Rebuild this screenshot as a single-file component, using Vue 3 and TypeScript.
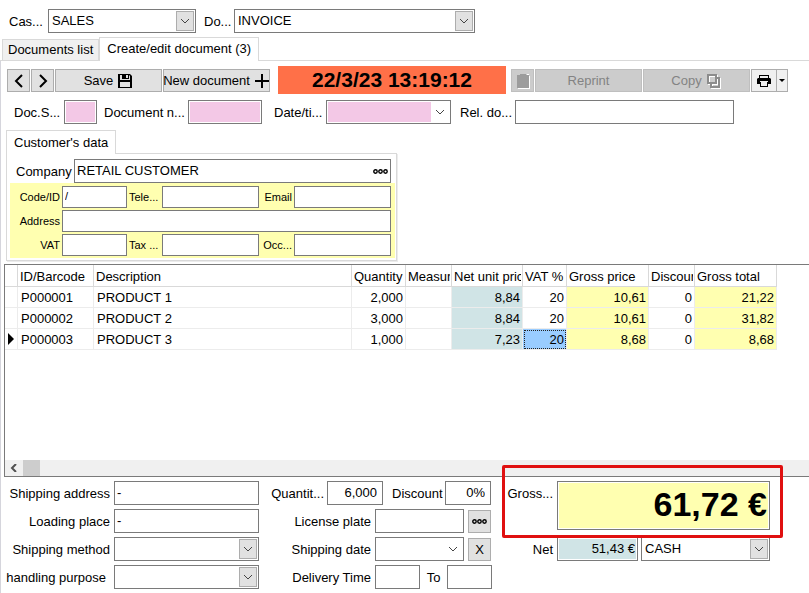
<script setup lang="ts">
import { ref } from 'vue'

interface Column {
  key: keyof Line
  title: string
  kind: string
}

interface Line {
  id: string
  description: string
  quantity: string
  measure: string
  netPrice: string
  vat: string
  grossPrice: string
  discount: string
  grossTotal: string
}

const columns: Column[] = [
  { key: 'id', title: 'ID/Barcode', kind: 'id' },
  { key: 'description', title: 'Description', kind: 'description' },
  { key: 'quantity', title: 'Quantity', kind: 'quantity number' },
  { key: 'measure', title: 'Measure', kind: 'measure' },
  { key: 'netPrice', title: 'Net unit price', kind: 'net number' },
  { key: 'vat', title: 'VAT %', kind: 'vat number' },
  { key: 'grossPrice', title: 'Gross price', kind: 'gross number' },
  { key: 'discount', title: 'Discount', kind: 'discount number' },
  { key: 'grossTotal', title: 'Gross total', kind: 'gross number' },
]

const lines: Line[] = [
  { id: 'P000001', description: 'PRODUCT 1', quantity: '2,000', measure: '', netPrice: '8,84', vat: '20', grossPrice: '10,61', discount: '0', grossTotal: '21,22' },
  { id: 'P000002', description: 'PRODUCT 2', quantity: '3,000', measure: '', netPrice: '8,84', vat: '20', grossPrice: '10,61', discount: '0', grossTotal: '31,82' },
  { id: 'P000003', description: 'PRODUCT 3', quantity: '1,000', measure: '', netPrice: '7,23', vat: '20', grossPrice: '8,68', discount: '0', grossTotal: '8,68' },
]

const currentLine = ref(2)
const company = ref('RETAIL CUSTOMER')
const code = ref('/')
const shippingAddress = ref('-')
const loadingPlace = ref('-')
const quantity = ref('6,000')
const discount = ref('0%')
const gross = ref('61,72 €')
const net = ref('51,43 €')
</script>

<template>
  <main class="window">
    <div class="filters">
      <label for="cash">Cas...</label>
      <span class="combo cash">
        <select id="cash"><option>SALES</option></select>
        <svg class="arrow boxed" viewBox="0 0 18 20"><path d="M5 8l4 4 4-4" /></svg>
      </span>
      <label for="doc-type">Do...</label>
      <span class="combo doc-type">
        <select id="doc-type"><option>INVOICE</option></select>
        <svg class="arrow boxed" viewBox="0 0 18 20"><path d="M5 8l4 4 4-4" /></svg>
      </span>
    </div>

    <nav class="tabs">
      <button class="tab" type="button">Documents list</button>
      <button class="tab active" type="button">Create/edit document (3)</button>
    </nav>

    <section class="page">
      <div class="toolbar">
        <button class="btn square" type="button" aria-label="Previous">
          <svg class="icon" viewBox="0 0 16 16"><path class="thick" d="M11 2L5 8l6 6" /></svg>
        </button>
        <button class="btn square" type="button" aria-label="Next">
          <svg class="icon" viewBox="0 0 16 16"><path class="thick" d="M5 2l6 6-6 6" /></svg>
        </button>
        <button class="btn wide" type="button">
          Save
          <svg class="icon" viewBox="0 0 16 16">
            <path fill-rule="evenodd" d="M1 1h12l2 2v12H1zM3 2v12h10V9H3zM3 2v5h10V3l-1-1v4H5V2zM9 2h2v3H9z" />
          </svg>
        </button>
        <button class="btn wide" type="button">
          New document
          <svg class="icon" viewBox="0 0 16 16"><path class="thick" d="M1 8h14M8 1v14" /></svg>
        </button>
        <output class="clock">22/3/23 13:19:12</output>
        <button class="btn square" type="button" disabled aria-label="Delete">
          <svg class="icon" viewBox="0 0 16 16">
            <path fill="#fff" d="M3 3h12v13H3zM12 1h2v1h-2z" />
            <path fill="#9c9c9c" d="M2 2h3V1h6v1h3v2H2zM2 4h12v11H2z" />
          </svg>
        </button>
        <button class="btn wide" type="button" disabled>Reprint</button>
        <button class="btn wide" type="button" disabled>
          Copy
          <svg class="icon" viewBox="0 0 16 16">
            <g fill="none" stroke-width="2">
              <path stroke="#fff" d="M3 3h8v8H3zM14 5v10H6v-3M12 5h2" />
              <path stroke="#8c8c8c" d="M2 2h8v8H2zM11 5h2v9H5v-3" />
            </g>
          </svg>
        </button>
        <button class="btn print" type="button" aria-label="Print">
          <svg class="icon" viewBox="0 0 16 16">
            <path fill-rule="evenodd" d="M3 2h10v3H3zM4 3v2h8V3zM2 5h12l1 1v5h-3V9H4v2H1V6zM4 8h8v6H4zM5 9v4h6V9z" />
          </svg>
        </button>
        <button class="btn more" type="button" aria-label="Print options">
          <svg viewBox="0 0 6 4"><path d="M0 0h6L3 3z" /></svg>
        </button>
      </div>

      <div class="document">
        <label class="l-series" for="series">Doc.S...</label>
        <input id="series" class="field pink series" type="text">
        <label class="l-number" for="number">Document n...</label>
        <input id="number" class="field pink number-box" type="text">
        <label class="l-date" for="date">Date/ti...</label>
        <span class="combo date">
          <input id="date" type="text">
          <svg class="arrow" viewBox="0 0 18 20"><path d="M5 8l4 4 4-4" /></svg>
        </span>
        <label class="l-related" for="related">Rel. do...</label>
        <input id="related" class="field related" type="text">
      </div>

      <section class="customer">
        <button class="customer-tab" type="button">Customer's data</button>
        <div class="customer-panel">
          <div class="company">
            <label for="company">Company</label>
            <span class="combo">
              <input id="company" v-model="company" type="text">
              <button class="dots" type="button" aria-label="Choose company">
                <svg viewBox="0 0 15 5"><circle cx="2.500" cy="2.500" r="1.700" /><circle cx="7.500" cy="2.500" r="1.700" /><circle cx="12.500" cy="2.500" r="1.700" /></svg>
              </button>
            </span>
          </div>
          <div class="details">
            <label for="code">Code/ID</label>
            <input id="code" v-model="code" class="field" type="text">
            <label class="start" for="phone">Tele...</label>
            <input id="phone" class="field" type="text">
            <label for="email">Email</label>
            <input id="email" class="field" type="text">
            <label for="address">Address</label>
            <input id="address" class="field whole" type="text">
            <label for="vat">VAT</label>
            <input id="vat" class="field" type="text">
            <label class="start" for="tax">Tax ...</label>
            <input id="tax" class="field" type="text">
            <label for="occupation">Occ...</label>
            <input id="occupation" class="field" type="text">
          </div>
        </div>
      </section>

      <section class="lines">
        <div class="lines-body">
          <table>
            <colgroup>
              <col class="marker">
              <col v-for="column in columns" :key="column.key" :class="column.kind">
            </colgroup>
            <thead>
              <tr>
                <th></th>
                <th v-for="column in columns" :key="column.key"><div>{{ column.title }}</div></th>
              </tr>
            </thead>
            <tbody>
              <tr v-for="(line, index) in lines" :key="line.id" @click="currentLine = index">
                <td class="marker">
                  <svg v-if="index === currentLine" viewBox="0 0 6 12"><path d="M0 0l6 6-6 6z" /></svg>
                </td>
                <td
                  v-for="column in columns"
                  :key="column.key"
                  :class="[column.kind, { selected: column.key === 'vat' && index === currentLine }]"
                >{{ line[column.key] }}</td>
              </tr>
            </tbody>
          </table>
        </div>
        <div class="scrollbar">
          <button type="button" aria-label="Scroll left">
            <svg viewBox="0 0 8 8"><path d="M6 0L2 4l4 4" /></svg>
          </button>
          <div class="thumb"></div>
        </div>
      </section>

      <div class="footer">
        <div class="shipping">
          <label for="ship-address">Shipping address</label>
          <input id="ship-address" v-model="shippingAddress" class="field" type="text">
          <label for="loading">Loading place</label>
          <input id="loading" v-model="loadingPlace" class="field" type="text">
          <label for="method">Shipping method</label>
          <span class="combo">
            <select id="method"><option></option></select>
            <svg class="arrow boxed" viewBox="0 0 18 20"><path d="M5 8l4 4 4-4" /></svg>
          </span>
          <label class="purpose" for="purpose">handling purpose</label>
          <span class="combo">
            <select id="purpose"><option></option></select>
            <svg class="arrow boxed" viewBox="0 0 18 20"><path d="M5 8l4 4 4-4" /></svg>
          </span>
        </div>

        <div class="delivery">
          <div class="row">
            <label for="quantity">Quantit...</label>
            <input id="quantity" v-model="quantity" class="field end quantity-box" type="text">
            <label class="l-discount" for="discount">Discount</label>
            <input id="discount" v-model="discount" class="field end discount-box" type="text">
          </div>
          <div class="row">
            <label for="plate">License plate</label>
            <input id="plate" class="field plate" type="text">
            <button class="btn square" type="button" aria-label="Choose vehicle">
              <svg class="dots-icon" viewBox="0 0 15 5"><circle cx="2.500" cy="2.500" r="1.700" /><circle cx="7.500" cy="2.500" r="1.700" /><circle cx="12.500" cy="2.500" r="1.700" /></svg>
            </button>
          </div>
          <div class="row">
            <label for="ship-date">Shipping date</label>
            <span class="combo plate">
              <input id="ship-date" type="text">
              <svg class="arrow" viewBox="0 0 18 20"><path d="M5 8l4 4 4-4" /></svg>
            </span>
            <button class="btn square" type="button">X</button>
          </div>
          <div class="row">
            <label for="time-from">Delivery Time</label>
            <input id="time-from" class="field time" type="text">
            <label class="l-to" for="time-to">To</label>
            <input id="time-to" class="field time" type="text">
          </div>
        </div>

        <div class="totals">
          <label for="gross">Gross...</label>
          <input id="gross" v-model="gross" class="field end gross-box" type="text">
          <label class="l-net" for="net">Net</label>
          <input id="net" v-model="net" class="field end net-box" type="text">
          <span class="combo">
            <select aria-label="Payment"><option>CASH</option></select>
            <svg class="arrow boxed" viewBox="0 0 18 20"><path d="M5 8l4 4 4-4" /></svg>
          </span>
          <div class="highlight"></div>
        </div>
      </div>
    </section>
  </main>
</template>

<style>
body {
  background: #fff;
}
</style>

<style scoped>
.window,
.window * {
  box-sizing: border-box;
}

.window {
  display: flex;
  flex-direction: column;
  min-height: 100vh;
  overflow: hidden;
  color: #000;
  font: 13px/16px "Liberation Sans", Arial, sans-serif;
}

button,
input,
select {
  margin: 0;
  color: inherit;
  font: inherit;
}

label {
  padding-top: 2px;
  white-space: nowrap;
}

svg {
  display: block;
  flex: none;
}

/* Fields */
.field,
.combo {
  height: 24px;
  border: 1px solid #7a7a7a;
  border-radius: 0;
  background: #fff;
}

.field {
  min-width: 0;
  padding: 0 2px 2px;
  outline: none;
}

.end {
  text-align: right;
}

.pink {
  background: #f3c8e6;
  box-shadow: inset 0 0 0 1px #fff;
}

.combo {
  display: grid;
  grid-template-columns: minmax(0, 1fr) 18px;
  padding: 1px;
}

.combo select,
.combo input {
  grid-area: 1 / 1 / 2 / 3;
  width: 100%;
  min-width: 0;
  height: 20px;
  padding: 0 2px;
  border: 0;
  outline: none;
  appearance: none;
  background: transparent;
}

.combo input {
  padding: 0 1px 2px;
}

.arrow {
  grid-area: 1 / 2;
  width: 18px;
  height: 20px;
  fill: none;
  stroke: #444;
  pointer-events: none;
}

.boxed {
  background: #e1e1e1;
  outline: 1px solid #adadad;
  outline-offset: -1px;
}

/* Buttons */
.btn {
  display: flex;
  align-items: center;
  justify-content: center;
  gap: 4px;
  height: 23px;
  padding: 1px 0 0;
  border: 1px solid #adadad;
  background: #e1e1e1;
  white-space: nowrap;
}

.btn:disabled {
  border-color: #bfbfbf;
  background: #ccc;
  color: #838383;
}

.square {
  width: 23px;
}

.wide {
  width: 107px;
}

.icon {
  width: 16px;
  height: 16px;
}

.thick {
  fill: none;
  stroke: #000;
  stroke-width: 2;
}

/* Top filters */
.filters {
  display: flex;
  align-items: center;
  padding: 9px 9px 0;
}

.filters label {
  width: 39px;
}

.filters .cash {
  width: 148px;
  margin-right: 8px;
}

.filters .cash + label {
  width: 30px;
}

.doc-type {
  width: 241px;
}

/* Document tabs */
.tabs {
  display: flex;
  align-items: flex-end;
  height: 28px;
  padding-left: 2px;
  border-bottom: 1px solid #d9d9d9;
}

.tab {
  height: 21px;
  padding: 0 5px;
  border: 1px solid #d9d9d9;
  border-bottom: 0;
  background: #f0f0f0;
  white-space: nowrap;
}

.tab.active {
  height: 24px;
  margin: 0 0 -1px;
  padding: 0 7px 2px;
  background: #fff;
}

.page {
  display: flex;
  flex: 1;
  flex-direction: column;
  border-left: 1px solid #d5d5dc;
}

.toolbar {
  display: flex;
  align-items: center;
  gap: 1px;
  padding: 5px 6px 0;
}

.clock {
  width: 228px;
  height: 28px;
  margin: 0 4px 0 7px;
  background: #ff7048;
  font-size: 21px;
  font-weight: bold;
  line-height: 28px;
  text-align: center;
}

.print,
.more {
  background: #f0f0f0;
}

.print {
  width: 26px;
}

.more {
  width: 12px;
  margin-left: -2px;
}

.more svg {
  width: 6px;
  height: 4px;
}

.document {
  display: flex;
  align-items: center;
  padding: 6px 13px 0;
}

.l-series {
  width: 50px;
}

.series {
  width: 33px;
  margin-right: 7px;
}

.l-number {
  width: 84px;
}

.number-box {
  width: 74px;
  margin-right: 12px;
}

.l-date {
  width: 52px;
}

.date {
  width: 125px;
  margin-right: 9px;
}

.combo.date input {
  grid-area: 1 / 1;
  background: #f3c8e6;
}

.l-related {
  width: 55px;
}

.related {
  width: 219px;
}

/* Customer */
.customer {
  width: 396px;
  padding: 6px 0 0 5px;
}

.customer-tab {
  display: block;
  position: relative;
  height: 24px;
  padding: 0 7px;
  border: 1px solid #d9d9d9;
  border-bottom: 0;
  background: #fff;
}

.customer-panel {
  margin-top: -1px;
  padding: 5px 1px 2px 3px;
  border: 1px solid #d9d9d9;
  box-shadow: 1px 1px 0 #ececec;
}

.company {
  display: grid;
  grid-template-columns: 64px 1fr;
  align-items: center;
  padding-right: 4px;
}

.company label {
  padding-left: 6px;
}

.dots {
  grid-area: 1 / 2;
  display: grid;
  place-items: center;
  position: relative;
  padding: 0;
  border: 0;
  background: transparent;
}

.dots svg,
.dots-icon {
  width: 15px;
  height: 5px;
  fill: none;
  stroke: #000;
  stroke-width: 1.4;
}

.details {
  display: grid;
  grid-template-columns: 50px 65px 31px 97px 31px 97px;
  gap: 2px;
  align-items: center;
  padding: 3px 4px 2px 0;
  background: #ffffb0;
  font-size: 11px;
  column-gap: 2px;
}

.details label {
  padding-top: 0;
  text-align: right;
}

.details .start {
  text-align: left;
}

.details .field {
  height: 22px;
}

.details .whole {
  grid-column: 2 / -1;
}

/* Document lines */
.lines {
  display: flex;
  flex: 1;
  flex-direction: column;
  min-height: 150px;
  margin: 3px 0 0 3px;
  border: 1px solid #7a7a7a;
  border-right: 0;
}

.lines-body {
  flex: 1;
  overflow: hidden;
}

table {
  width: 772px;
  border-spacing: 0;
  table-layout: fixed;
}

col.marker {
  width: 13px;
}

col.id {
  width: 76px;
}

col.description {
  width: 258px;
}

col.quantity {
  width: 54px;
}

col.measure,
col.discount {
  width: 46px;
}

col.net {
  width: 71px;
}

col.vat {
  width: 44px;
}

col.gross {
  width: 82px;
}

th,
td {
  overflow: hidden;
  height: 21px;
  padding: 2px 3px 0;
  border-right: 1px solid #ececec;
  border-bottom: 1px solid #ececec;
  text-align: left;
  white-space: nowrap;
}

th {
  height: 22px;
  padding: 2px 1px 0 2px;
  border-color: #d9d9d9;
  font-weight: normal;
}

th div {
  overflow: hidden;
}

td.number {
  padding-right: 2px;
  text-align: right;
}

td.marker {
  padding-top: 0;
}

td.marker svg {
  width: 6px;
  height: 12px;
}

td.net {
  background: #d0e4e6;
}

td.gross {
  background: #ffffb0;
}

td.selected {
  background: #99ccff;
  outline: 1px dotted #222;
  outline-offset: -2px;
}

.scrollbar {
  display: flex;
  height: 16px;
  background: #f0f0f0;
}

.scrollbar button {
  display: grid;
  place-items: center;
  width: 18px;
  padding: 0;
  border: 0;
  background: transparent;
}

.scrollbar svg {
  width: 8px;
  height: 8px;
  fill: none;
  stroke: #505050;
  stroke-width: 2;
}

.thumb {
  width: 17px;
  background: #cdcdcd;
}

/* Footer */
.footer {
  display: flex;
  align-items: flex-start;
  padding: 4px 0;
}

.shipping {
  display: grid;
  grid-template-columns: 109px 145px;
  gap: 4px;
  align-items: center;
  column-gap: 4px;
}

.shipping label,
.row > label:first-child,
.totals label {
  text-align: right;
}

.purpose {
  padding-right: 4px;
}

.delivery {
  display: flex;
  flex-direction: column;
  gap: 4px;
  width: 233px;
}

.row {
  display: flex;
  align-items: center;
}

.row > label:first-child {
  width: 112px;
  margin-right: 4px;
}

.row:first-child > label:first-child {
  width: 65px;
  margin-right: 3px;
}

.quantity-box {
  width: 56px;
}

.quantity-box,
.discount-box {
  padding-right: 5px;
}

.l-discount {
  width: 62px;
  padding-left: 9px;
}

.discount-box {
  width: 46px;
}

.plate {
  width: 89px;
  margin-right: 4px;
}

.time {
  width: 45px;
}

.l-to {
  width: 27px;
  text-align: center;
}

.totals {
  display: grid;
  grid-template-columns: 48px 81px 129px;
  grid-template-rows: 49px 24px;
  gap: 7px 3px;
  position: relative;
  margin-left: 14px;
}

.totals label {
  padding: 5px 1px 0 0;
}

.gross-box {
  grid-column: 2 / 4;
  width: 100%;
  height: 49px;
  padding: 0 2px 2px;
  background: #ffffb0;
  box-shadow: inset 0 0 0 1px #fff;
  font-size: 34px;
  font-weight: bold;
}

.net-box {
  padding: 0 2px 2px;
  background: #d0e4e6;
  box-shadow: inset 0 0 0 1px #fff;
}

.highlight {
  position: absolute;
  inset: -16px -13px 23px -4px;
  border: 3px solid #e01010;
  border-radius: 2px;
  pointer-events: none;
}
</style>
